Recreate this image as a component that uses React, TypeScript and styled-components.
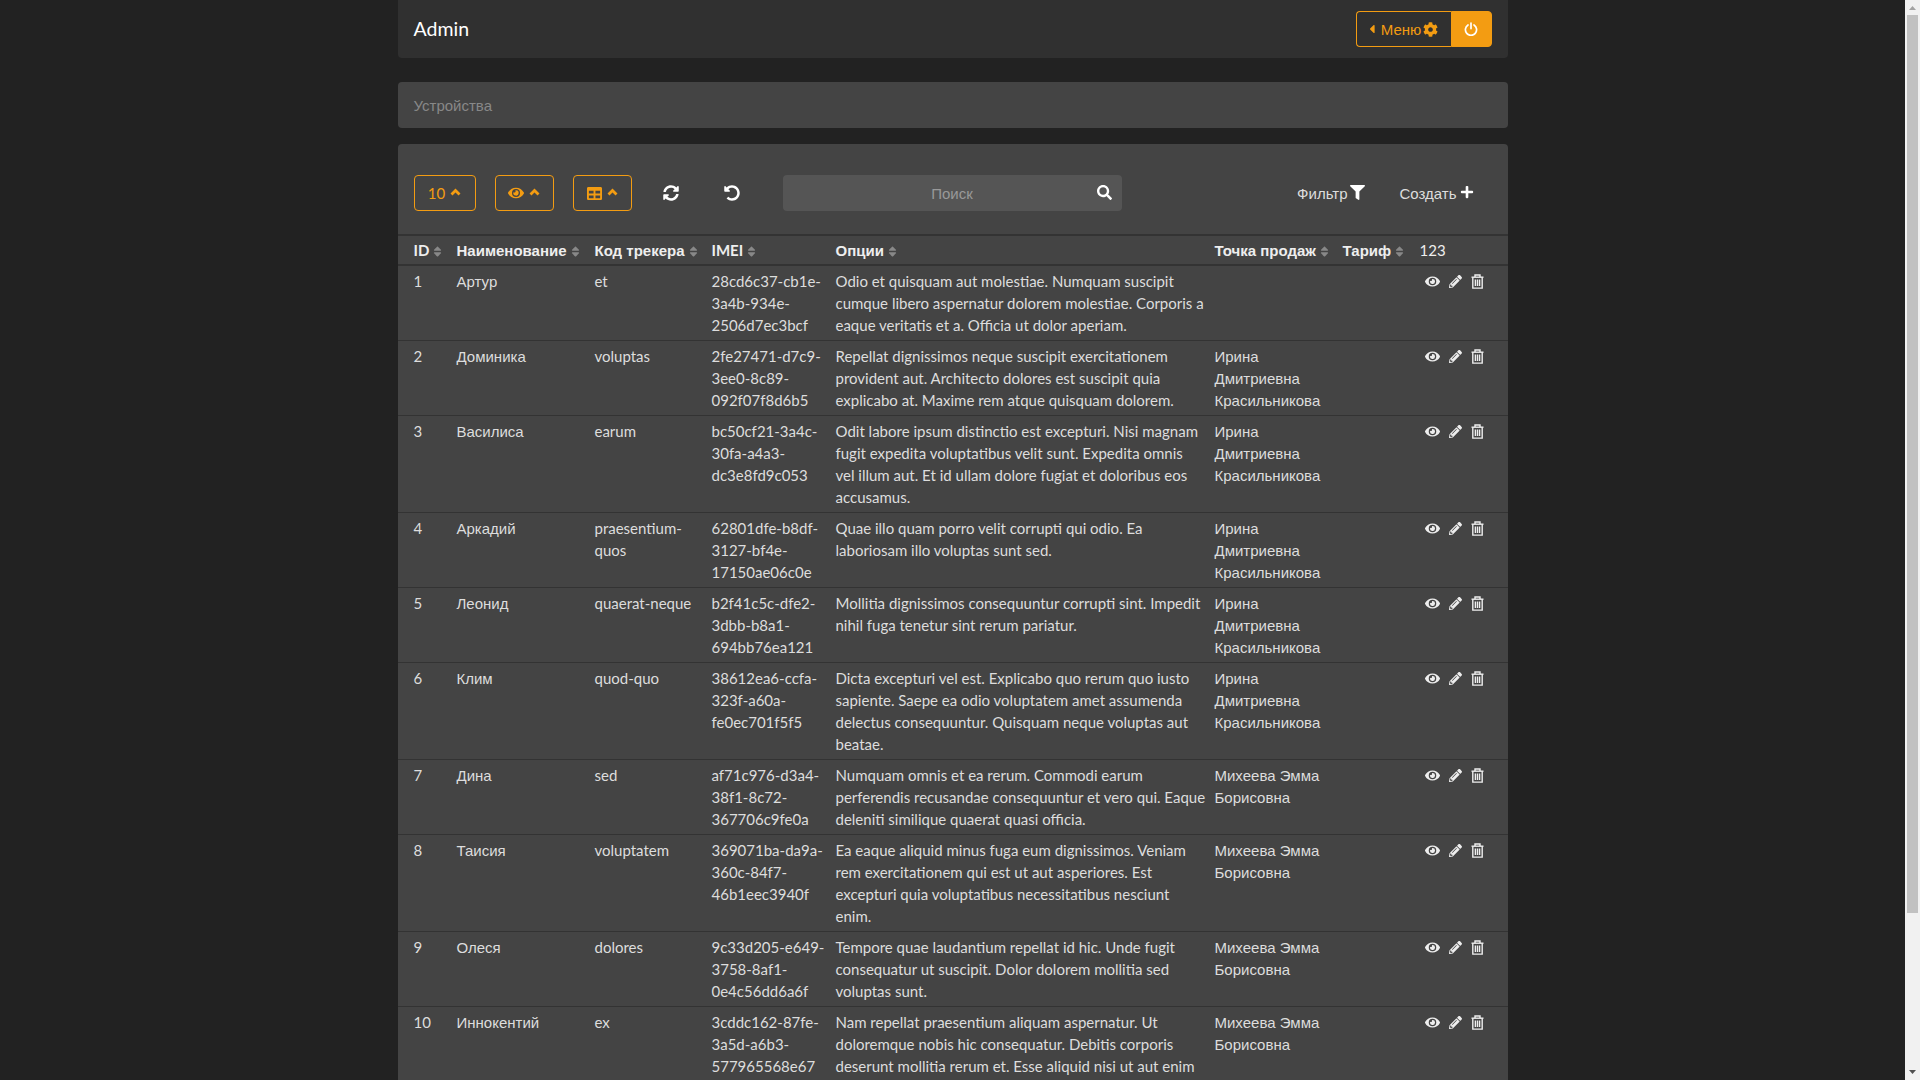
import React from "react";
import styled, {createGlobalStyle} from "styled-components";
import {
  FaCaretLeft,
  FaCog,
  FaEye,
  FaFilter,
  FaPencilAlt,
  FaPlus,
  FaSearch,
  FaSort,
  FaSyncAlt,
  FaTable,
  FaUndoAlt,
} from "react-icons/fa";

const ORANGE = "#f39c12";
const CYRILLIC = `"Liberation Sans", sans-serif`;

const GlobalStyle = createGlobalStyle`
  html, body, #root {
    height: 100%;
  }
  body {
    margin: 0;
    overflow: hidden;
    background: #222;
    color: #ddd;
    font-family: Lato, "Liberation Sans", sans-serif;
    font-size: 15px;
    line-height: 22px;
  }
`;

const Shell = styled.div`
  height: 100%;
  display: flex;
`;

const Viewport = styled.main`
  flex: 1;
  min-width: 0;
  overflow: hidden;
`;

const ScrollTrack = styled.div`
  flex: 0 0 15px;
  display: flex;
  flex-direction: column;
  align-items: center;
  background: #f1f1f1;
`;

const ScrollArrow = styled.svg<{$grow?: boolean}>`
  flex: none;
  width: 15px;
  height: 15px;
  margin-top: ${(p) => (p.$grow ? "auto" : "0")};
`;

const ScrollThumb = styled.div`
  width: 11px;
  height: 898px;
  background: #c1c1c1;
`;

const Page = styled.div`
  width: 1110px;
  margin: 0 auto;
`;

const Navbar = styled.nav`
  height: 58px;
  display: flex;
  align-items: center;
  justify-content: space-between;
  padding: 0 16px;
  background: #303030;
  border-radius: 0 0 4px 4px;
`;

const Brand = styled.span`
  color: #fff;
  font-size: 19.5px;
`;

const BtnGroup = styled.div`
  display: flex;
  height: 36px;
`;

const MenuButton = styled.button`
  width: 95px;
  display: flex;
  align-items: center;
  justify-content: center;
  gap: 2px;
  padding: 0 4px 0 0;
  background: transparent;
  border: 1px solid ${ORANGE};
  border-right: 0;
  border-radius: 4px 0 0 4px;
  color: ${ORANGE};
  font: 15px ${CYRILLIC};
`;

const PowerButton = styled.button`
  width: 41px;
  display: flex;
  align-items: center;
  justify-content: center;
  padding: 0;
  background: ${ORANGE};
  border: 1px solid ${ORANGE};
  border-radius: 0 4px 4px 0;
`;

const PowerIcon = styled.svg`
  width: 14px;
  height: 14px;
  fill: none;
  stroke: #fff;
  stroke-width: 1.7;
  stroke-linecap: round;
`;

const Breadcrumb = styled.div`
  height: 46px;
  margin-top: 24px;
  padding: 13px 16px 0;
  box-sizing: border-box;
  background: #444;
  border-radius: 4px;
  color: #888;
  font-family: ${CYRILLIC};
`;

const Card = styled.section`
  margin-top: 16px;
  background: #444;
  border-radius: 4px 4px 0 0;
`;

const Toolbar = styled.div`
  height: 90px;
  display: flex;
  align-items: flex-start;
  padding: 31px 22px 0 16px;
  box-sizing: border-box;
`;

const OutlineButton = styled.button<{$width: number; $gap: number}>`
  width: ${(p) => p.$width}px;
  height: 36px;
  margin-right: ${(p) => p.$gap}px;
  display: flex;
  align-items: center;
  justify-content: center;
  gap: 5px;
  padding: 0;
  background: transparent;
  border: 1px solid ${ORANGE};
  border-radius: 4px;
  color: ${ORANGE};
  font: 15px Lato, sans-serif;
`;

const Chevron = styled.svg`
  width: 11px;
  height: 8px;
  margin-top: -3px;
  fill: none;
  stroke: currentColor;
  stroke-width: 2.8;
`;

const IconButton = styled.button<{$width: number}>`
  width: ${(p) => p.$width}px;
  height: 36px;
  display: flex;
  align-items: center;
  justify-content: center;
  padding: 0;
  background: transparent;
  border: 0;
  color: #fff;
  font-size: 16px;
`;

const SearchBox = styled.div`
  position: relative;
  width: 339px;
  height: 36px;
  margin-left: 29px;
`;

const SearchInput = styled.input`
  width: 100%;
  height: 100%;
  box-sizing: border-box;
  padding: 0 36px;
  background: #555;
  border: 0;
  border-radius: 4px;
  color: #fff;
  text-align: center;
  font: 15px ${CYRILLIC};
  &::placeholder {
    color: #999;
    opacity: 1;
  }
`;

const SearchIcon = styled.span`
  position: absolute;
  top: 10px;
  right: 10px;
  display: flex;
  color: #fff;
  font-size: 15px;
`;

const TextButton = styled.button<{$auto?: boolean}>`
  height: 36px;
  margin-left: ${(p) => (p.$auto ? "auto" : "10px")};
  display: flex;
  align-items: center;
  gap: 3px;
  padding: 0 12px;
  background: transparent;
  border: 0;
  color: #ddd;
  font: 15px ${CYRILLIC};
  svg {
    color: #fff;
    margin-top: -2px;
  }
`;

const Table = styled.table`
  width: 100%;
  table-layout: fixed;
  border-collapse: collapse;
`;

const HeadCell = styled.th<{$latin?: boolean}>`
  height: 30px;
  padding: ${(p) => (p.$latin ? "0 4px" : "1px 4px 0")};
  box-sizing: border-box;
  border-top: 2px solid #333;
  border-bottom: 2px solid #333;
  color: #eee;
  font-family: ${(p) => (p.$latin ? "Lato, sans-serif" : CYRILLIC)};
  font-weight: 700;
  text-align: left;
  white-space: nowrap;
  &:first-child {
    padding-left: 16px;
  }
  svg {
    margin-left: 2px;
    color: #888;
    font-size: 13px;
    vertical-align: -2px;
  }
`;

const PlainHead = styled(HeadCell)`
  font-weight: 400;
`;

const Row = styled.tr`
  border-bottom: 1px solid #333;
`;

const Cell = styled.td`
  padding: 4px 5px 4px 4px;
  vertical-align: top;
  &:first-child {
    padding-left: 16px;
  }
`;

const CyrillicCell = styled(Cell)`
  padding-top: 5px;
  padding-bottom: 3px;
  font-family: ${CYRILLIC};
`;

const Actions = styled.div`
  display: flex;
  align-items: center;
  height: 22px;
  padding-left: 5px;
  gap: 9px;
  color: #eee;
`;

const ActionIcon = styled.span<{$width: number}>`
  width: ${(p) => p.$width}px;
  display: flex;
  justify-content: center;
`;

const TrashIcon = styled.svg`
  width: 13px;
  height: 15px;
  fill: none;
  stroke: currentColor;
  stroke-width: 1.4;
`;

const IRINA = "Ирина Дмитриевна Красильникова";
const EMMA = "Михеева Эмма Борисовна";

const rows = [
  ["1", "Артур", "et", "28cd6c37-cb1e-3a4b-934e-2506d7ec3bcf", "Odio et quisquam aut molestiae. Numquam suscipit cumque libero aspernatur dolorem molestiae. Corporis a eaque veritatis et a. Officia ut dolor aperiam.", ""],
  ["2", "Доминика", "voluptas", "2fe27471-d7c9-3ee0-8c89-092f07f8d6b5", "Repellat dignissimos neque suscipit exercitationem provident aut. Architecto dolores est suscipit quia explicabo at. Maxime rem atque quisquam dolorem.", IRINA],
  ["3", "Василиса", "earum", "bc50cf21-3a4c-30fa-a4a3-dc3e8fd9c053", "Odit labore ipsum distinctio est excepturi. Nisi magnam fugit expedita voluptatibus velit sunt. Expedita omnis vel\u00a0illum aut. Et id ullam dolore fugiat et doloribus eos accusamus.", IRINA],
  ["4", "Аркадий", "praesentium-quos", "62801dfe-b8df-3127-bf4e-17150ae06c0e", "Quae illo quam porro velit corrupti qui odio. Ea laboriosam illo voluptas sunt sed.", IRINA],
  ["5", "Леонид", "quaerat-neque", "b2f41c5c-dfe2-3dbb-b8a1-694bb76ea121", "Mollitia dignissimos consequuntur corrupti sint. Impedit nihil fuga tenetur sint rerum pariatur.", IRINA],
  ["6", "Клим", "quod-quo", "38612ea6-ccfa-323f-a60a-fe0ec701f5f5", "Dicta excepturi vel est. Explicabo quo rerum quo iusto sapiente. Saepe ea odio voluptatem amet assumenda delectus consequuntur. Quisquam neque voluptas aut beatae.", IRINA],
  ["7", "Дина", "sed", "af71c976-d3a4-38f1-8c72-367706c9fe0a", "Numquam omnis et ea rerum. Commodi earum perferendis recusandae consequuntur et vero qui. Eaque deleniti similique quaerat quasi officia.", EMMA],
  ["8", "Таисия", "voluptatem", "369071ba-da9a-360c-84f7-46b1eec3940f", "Ea eaque aliquid minus fuga eum dignissimos. Veniam rem exercitationem qui est ut aut asperiores. Est excepturi quia voluptatibus necessitatibus nesciunt enim.", EMMA],
  ["9", "Олеся", "dolores", "9c33d205-e649-3758-8af1-0e4c56dd6a6f", "Tempore quae laudantium repellat id hic. Unde fugit consequatur ut suscipit. Dolor dolorem mollitia sed voluptas sunt.", EMMA],
  ["10", "Иннокентий", "ex", "3cddc162-87fe-3a5d-a6b3-577965568e67", "Nam repellat praesentium aliquam aspernatur. Ut doloremque nobis hic consequatur. Debitis corporis deserunt mollitia rerum et. Esse aliquid nisi ut aut enim vel.", EMMA],
];

const columns = [55, 138, 117, 124, 379, 128, 77, 92];
const headers = ["ID", "Наименование", "Код трекера", "IMEI", "Опции", "Точка продаж", "Тариф"];

const ChevronUp = () => (
  <Chevron viewBox="0 0 11 8">
    <polyline points="1.5,6.5 5.5,2.5 9.5,6.5" />
  </Chevron>
);

export default function App() {
  return (
    <>
      <GlobalStyle />
      <Shell>
        <Viewport>
          <Page>
            <Navbar>
              <Brand>Admin</Brand>
              <BtnGroup>
                <MenuButton>
                  <FaCaretLeft size={14} />
                  Меню
                  <FaCog size={15} />
                </MenuButton>
                <PowerButton>
                  <PowerIcon viewBox="0 0 14 14">
                    <path d="M4 3a5.6 5.6 0 1 0 6 0" />
                    <path d="M7 1v5.6" />
                  </PowerIcon>
                </PowerButton>
              </BtnGroup>
            </Navbar>
            <Breadcrumb>Устройства</Breadcrumb>
            <Card>
              <Toolbar>
                <OutlineButton $width={62} $gap={19}>
                  10 <ChevronUp />
                </OutlineButton>
                <OutlineButton $width={59} $gap={19}>
                  <FaEye size={16} />
                  <ChevronUp />
                </OutlineButton>
                <OutlineButton $width={59} $gap={0}>
                  <FaTable size={15} />
                  <ChevronUp />
                </OutlineButton>
                <IconButton $width={78}>
                  <FaSyncAlt />
                </IconButton>
                <IconButton $width={44}>
                  <FaUndoAlt />
                </IconButton>
                <SearchBox>
                  <SearchInput placeholder="Поиск" />
                  <SearchIcon>
                    <FaSearch />
                  </SearchIcon>
                </SearchBox>
                <TextButton $auto>
                  Фильтр <FaFilter size={15} />
                </TextButton>
                <TextButton>
                  Создать <FaPlus size={14} />
                </TextButton>
              </Toolbar>
              <Table>
                <colgroup>
                  {columns.map((width, i) => (
                    <col key={i} width={width} />
                  ))}
                </colgroup>
                <thead>
                  <tr>
                    {headers.map((title) => (
                      <HeadCell key={title} $latin={title === "ID" || title === "IMEI"}>
                        {title}
                        <FaSort />
                      </HeadCell>
                    ))}
                    <PlainHead $latin>123</PlainHead>
                  </tr>
                </thead>
                <tbody>
                  {rows.map(([id, name, code, imei, options, point]) => (
                    <Row key={id}>
                      <Cell>{id}</Cell>
                      <CyrillicCell>{name}</CyrillicCell>
                      <Cell>{code}</Cell>
                      <Cell>{imei}</Cell>
                      <Cell>{options}</Cell>
                      <CyrillicCell>{point}</CyrillicCell>
                      <Cell />
                      <Cell>
                        <Actions>
                          <ActionIcon $width={15}>
                            <FaEye size={15} />
                          </ActionIcon>
                          <ActionIcon $width={13}>
                            <FaPencilAlt size={13} />
                          </ActionIcon>
                          <ActionIcon $width={13}>
                            <TrashIcon viewBox="0 0 13 15">
                              <path d="M0.5 3.2h12" />
                              <path d="M4 3V1h5v2" />
                              <path d="M1.8 3.2v10.9h9.4V3.2" />
                              <path d="M4.4 5.5v6.5M6.5 5.5v6.5M8.6 5.5v6.5" />
                            </TrashIcon>
                          </ActionIcon>
                        </Actions>
                      </Cell>
                    </Row>
                  ))}
                </tbody>
              </Table>
            </Card>
          </Page>
        </Viewport>
        <ScrollTrack>
          <ScrollArrow viewBox="0 0 15 15">
            <polygon points="4,10 11,10 7.5,6" fill="#a3a3a3" />
          </ScrollArrow>
          <ScrollThumb />
          <ScrollArrow viewBox="0 0 15 15" $grow>
            <polygon points="4,5 11,5 7.5,9" fill="#505050" />
          </ScrollArrow>
        </ScrollTrack>
      </Shell>
    </>
  );
}
